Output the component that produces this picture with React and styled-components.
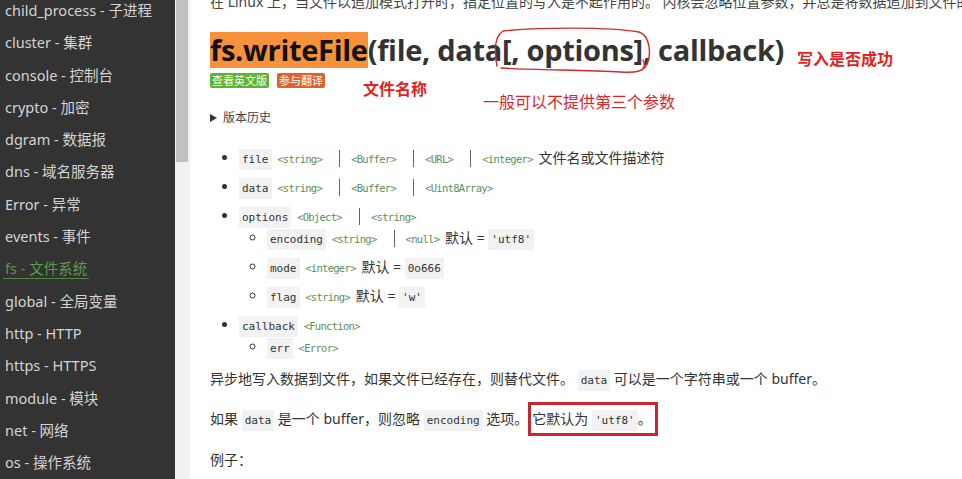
import React from 'react';
import styled, { createGlobalStyle } from 'styled-components';

const GlobalStyles = createGlobalStyle`
    html, body {
        margin: 0;
        padding: 0;
        overflow: hidden;
        background: #fff;
    }
`;

const BODY_FONT = `'Noto Sans', 'Noto Sans CJK SC', sans-serif`;
const MONO_FONT = `'DejaVu Sans Mono', 'Liberation Mono', monospace`;

const Page = styled.div`
    display: flex;
    height: 479px;
    width: 962px;
    overflow: hidden;
    font-family: ${BODY_FONT};
    color: #333;
`;

const Sidebar = styled.nav`
    width: 175px;
    flex-shrink: 0;
    background: #333;
    display: flex;
    flex-direction: column;
`;

const SideList = styled.div`
    margin-top: -6px;
`;

const SideItem = styled.div`
    height: 32.3px;
    line-height: 32px;
    padding-left: 5px;
    font-size: 14.5px;
    white-space: nowrap;
    color: ${p => (p.active ? '#5a9b48' : '#d4d4d4')};
`;

const ActiveLabel = styled.span`
    display: inline-block;
    line-height: 20px;
    margin-left: -2px;
    padding: 0 2px;
    border-bottom: 1px solid #4b8a3b;
`;

const ScrollTrack = styled.div`
    width: 15px;
    flex-shrink: 0;
    background: #f1f1f1;
    padding: 0 2px 0 1px;
    box-sizing: border-box;
`;

const Thumb = styled.div`
    height: 162px;
    background: #c1c1c1;
`;

const Main = styled.main`
    position: relative;
    flex: 1;
    padding-left: 20px;
    overflow: hidden;
    font-size: 14px;
`;

const TopNote = styled.p`
    margin: -9px 0 0;
    line-height: 22px;
    white-space: nowrap;
    color: #444;
`;

const Heading = styled.h1`
    margin: 19px 0 0;
    font-family: 'Open Sans', sans-serif;
    font-weight: 700;
    font-size: 29px;
    line-height: 36px;
    letter-spacing: -0.3px;
    color: #333;
    white-space: nowrap;
`;

const Highlight = styled.span`
    display: inline-block;
    background: #f8923a;
    color: #111;
`;

const Circled = styled.span`
    position: relative;
`;

const Loop = styled.svg`
    position: absolute;
    left: -9px;
    top: -4px;
    width: 160px;
    height: 50px;
    overflow: visible;
    pointer-events: none;
`;

const BadgeRow = styled.div`
    display: flex;
    gap: 8px;
    margin-top: 5px;
`;

const Badge = styled.span`
    display: inline-block;
    padding: 0 2px;
    font-size: 11px;
    line-height: 15px;
    color: #fff;
    border-radius: 2px;
    background: ${p => p.color};
`;

const Note = styled.div`
    position: absolute;
    left: ${p => p.x}px;
    top: ${p => p.y}px;
    font-size: 16px;
    line-height: 20px;
    font-weight: ${p => (p.bold ? 700 : 400)};
    color: #e02424;
    white-space: nowrap;
    font-family: 'Noto Sans CJK SC', sans-serif;
`;

const History = styled.div`
    display: flex;
    align-items: center;
    gap: 6px;
    margin-top: 22px;
    font-size: 12px;
    line-height: 16px;
    color: #444;
`;

const Arrow = styled.span`
    width: 0;
    height: 0;
    border-top: 4px solid transparent;
    border-bottom: 4px solid transparent;
    border-left: 7px solid #333;
`;

const List = styled.ul`
    margin: ${p => (p.nested ? '0' : '21px 0 0')};
    padding-left: ${p => (p.nested ? '28px' : '29px')};
    list-style: ${p => (p.nested ? 'circle' : 'disc')};
`;

const Item = styled.li`
    line-height: 22px;
    white-space: nowrap;
    & + & {
        margin-top: 7px;
    }
`;

const Code = styled.code`
    font-family: ${MONO_FONT};
    font-size: 11px;
    line-height: 1;
    background: #f2f2f2;
    padding: 4px 3px;
    color: #333;
`;

const Type = styled.span`
    font-family: ${MONO_FONT};
    font-size: 10.5px;
    line-height: 1;
    letter-spacing: -0.7px;
    color: #5b8f5b;
    margin: 0 2px;
`;

const Pipe = styled.span`
    display: inline-block;
    width: 1px;
    height: 17px;
    background: #666;
    vertical-align: -4px;
    margin: 0 9px 0 15px;
`;

const Para = styled.p`
    margin: ${p => p.gap}px 0 0;
    line-height: 22px;
    white-space: nowrap;
    color: #333;
`;

const Boxed = styled.span`
    display: inline-block;
    border: 3px solid #c7282e;
    padding: 3px 3px 3px 1px;
    line-height: 22px;
`;

const sideItems = [
    'child_process - 子进程',
    'cluster - 集群',
    'console - 控制台',
    'crypto - 加密',
    'dgram - 数据报',
    'dns - 域名服务器',
    'Error - 异常',
    'events - 事件',
    'fs - 文件系统',
    'global - 全局变量',
    'http - HTTP',
    'https - HTTPS',
    'module - 模块',
    'net - 网络',
    'os - 操作系统',
];

const Types = ({ names }) => (
    <>
        {names.map((n, i) => (
            <React.Fragment key={n}>
                {i > 0 && <Pipe />}
                <Type>&lt;{n}&gt;</Type>
            </React.Fragment>
        ))}
    </>
);

export default function App() {
    return (
        <Page>
            <GlobalStyles />
            <Sidebar>
                <SideList>
                    {sideItems.map(label => (
                        <SideItem key={label} active={label.startsWith('fs')}>
                            {label.startsWith('fs') ? <ActiveLabel>{label}</ActiveLabel> : label}
                        </SideItem>
                    ))}
                </SideList>
            </Sidebar>
            <ScrollTrack>
                <Thumb />
            </ScrollTrack>
            <Main>
                <TopNote>
                    在 Linux 上，当文件以追加模式打开时，指定位置的写入是不起作用的。 内核会忽略位置参数，并总是将数据追加到文件的末尾。
                </TopNote>
                <Heading>
                    <Highlight>fs.writeFile</Highlight>(file, data
                    <Circled>
                        [, options]
                        <Loop viewBox="0 0 160 50">
                            <path
                                d="M4 40 C1 24, 2 10, 10 5 C50 1, 115 1, 146 6 C156 9, 159 26, 154 38 C151 45, 144 47, 128 46 C90 44, 40 44, 8 42 M150 34 C152 38, 152 41, 149 44"
                                fill="none"
                                stroke="#d42a2a"
                                strokeWidth="1.4"
                                strokeLinecap="round"
                            />
                        </Loop>
                    </Circled>
                    , callback)
                </Heading>
                <BadgeRow>
                    <Badge color="#5cb531">查看英文版</Badge>
                    <Badge color="#e0622a">参与翻译</Badge>
                </BadgeRow>
                <Note x={607} y={48} bold>写入是否成功</Note>
                <Note x={173} y={78} bold>文件名称</Note>
                <Note x={293} y={91}>一般可以不提供第三个参数</Note>
                <History>
                    <Arrow />
                    版本历史
                </History>
                <List>
                    <Item>
                        <Code>file</Code> <Types names={['string', 'Buffer', 'URL', 'integer']} /> 文件名或文件描述符
                    </Item>
                    <Item>
                        <Code>data</Code> <Types names={['string', 'Buffer', 'Uint8Array']} />
                    </Item>
                    <Item>
                        <Code>options</Code> <Types names={['Object', 'string']} />
                        <List nested>
                            <Item>
                                <Code>encoding</Code> <Types names={['string', 'null']} /> 默认 = <Code>'utf8'</Code>
                            </Item>
                            <Item>
                                <Code>mode</Code> <Types names={['integer']} /> 默认 = <Code>0o666</Code>
                            </Item>
                            <Item>
                                <Code>flag</Code> <Types names={['string']} /> 默认 = <Code>'w'</Code>
                            </Item>
                        </List>
                    </Item>
                    <Item>
                        <Code>callback</Code> <Types names={['Function']} />
                        <List nested>
                            <Item>
                                <Code>err</Code> <Types names={['Error']} />
                            </Item>
                        </List>
                    </Item>
                </List>
                <Para gap={10}>
                    异步地写入数据到文件，如果文件已经存在，则替代文件。 <Code>data</Code> 可以是一个字符串或一个 buffer。
                </Para>
                <Para gap={12}>
                    如果 <Code>data</Code> 是一个 buffer，则忽略 <Code>encoding</Code> 选项。
                    <Boxed>
                        它默认为 <Code>'utf8'</Code>。
                    </Boxed>
                </Para>
                <Para gap={13}>例子：</Para>
            </Main>
        </Page>
    );
}
